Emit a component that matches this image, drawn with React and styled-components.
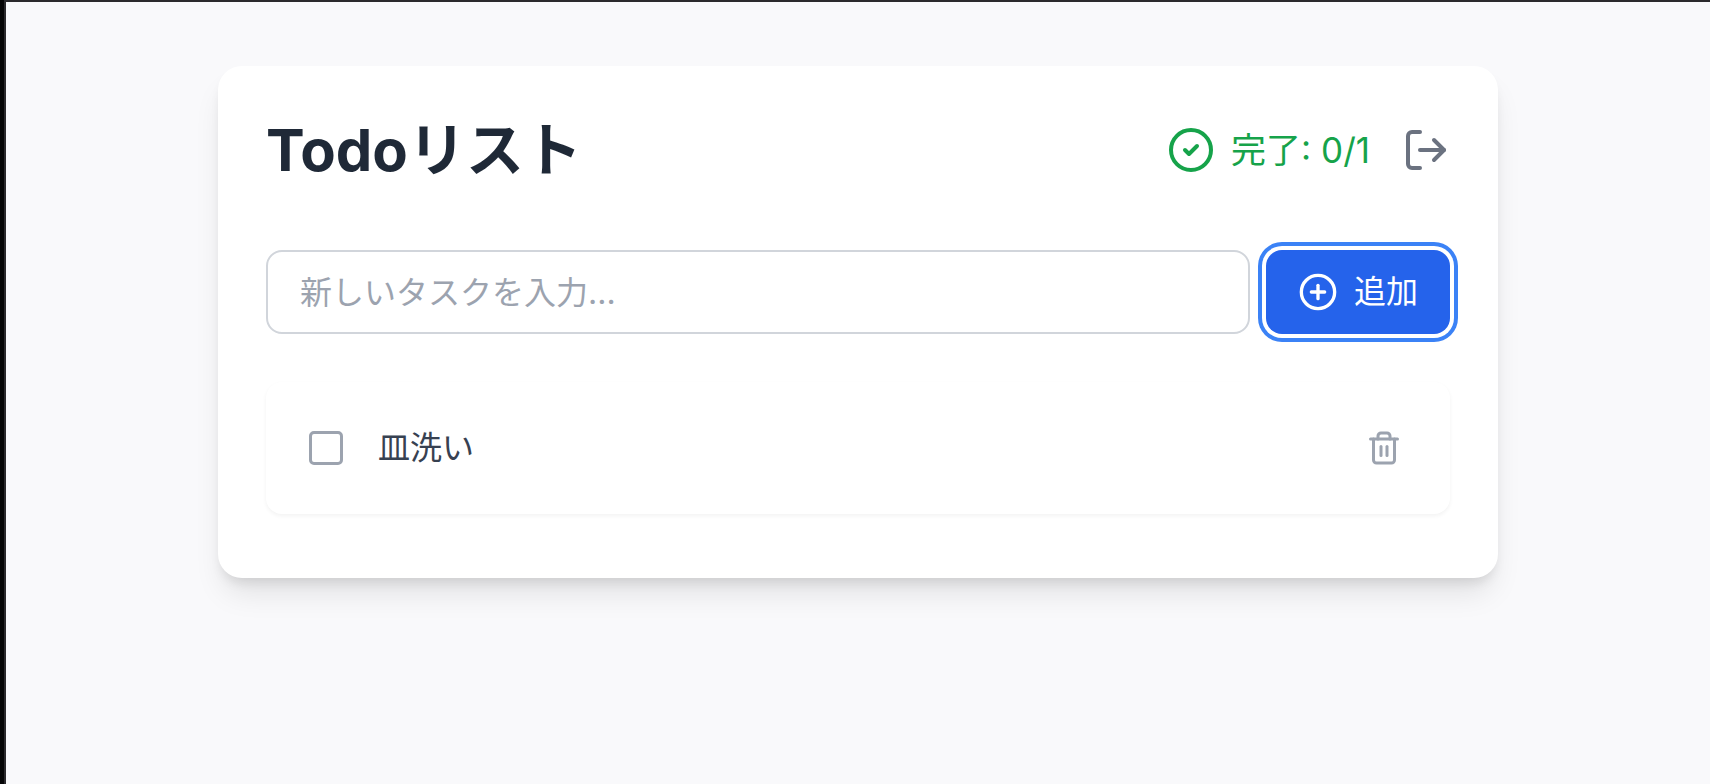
import React, { useState } from "react";
import styled, { createGlobalStyle } from "styled-components";
import { CircleCheck, CirclePlus, LogOut, Trash2 } from "lucide-react";

const GlobalStyle = createGlobalStyle`
  *, *::before, *::after { box-sizing: border-box; }
  body {
    margin: 0;
    background: #f9f9fb;
    color: #1f2937;
    font-family: Inter, "Noto Sans CJK JP", sans-serif;
    font-size: 32px;
    line-height: 48px;
  }
  button, input { font: inherit; }
  svg { display: block; flex: none; }
`;

const Frame = styled.div`
  min-height: 100vh;
  border-left: 4px solid #050506;
`;

const Page = styled.main`
  min-height: 100vh;
  padding: 64px 32px;
  border-top: 2px solid #2b2a2d;
  border-left: 2px solid #2b2a2d;
`;

const Card = styled.section`
  max-width: 1280px;
  margin: 0 auto;
  padding: 48px 48px 64px;
  border-radius: 24px;
  background: #fff;
  box-shadow: 0 20px 30px -6px rgba(0, 0, 0, 0.1), 0 8px 12px -4px rgba(0, 0, 0, 0.1);
`;

const Header = styled.header`
  display: flex;
  align-items: center;
  justify-content: space-between;
  margin-bottom: 64px;
`;

const Title = styled.h1`
  margin: 0;
  font-size: 58px;
  line-height: 72px;
  font-weight: 700;
`;

const HeaderActions = styled.div`
  display: flex;
  align-items: center;
  gap: 32px;
`;

const Progress = styled.div`
  display: flex;
  align-items: center;
  gap: 16px;
  color: #16a34a;
  font-size: 35px;
  line-height: 56px;
`;

const IconButton = styled.button`
  padding: ${(p) => p.$padding || 0}px;
  border: 0;
  background: none;
  color: ${(p) => p.$color};
  cursor: pointer;
`;

const Form = styled.form`
  display: flex;
  gap: 16px;
  margin-bottom: 48px;
`;

const TaskInput = styled.input`
  flex: 1;
  min-width: 0;
  height: 84px;
  padding: 0 32px;
  border: 2px solid #d1d5db;
  border-radius: 16px;
  background: #fff;
  color: #1f2937;
  &::placeholder { color: #9ca3af; opacity: 1; }
`;

const AddButton = styled.button`
  display: flex;
  align-items: center;
  gap: 16px;
  padding: 0 32px;
  border: 0;
  border-radius: 16px;
  background: #2563eb;
  color: #fff;
  white-space: nowrap;
  box-shadow: 0 0 0 4px #fff, 0 0 0 8px #3b82f6;
  cursor: pointer;
`;

const List = styled.ul`
  display: grid;
  gap: 24px;
  margin: 0;
  padding: 0;
  list-style: none;
`;

const Item = styled.li`
  display: flex;
  align-items: center;
  justify-content: space-between;
  padding: 32px;
  border-radius: 16px;
  background: #fff;
  box-shadow: 0 2px 4px rgba(0, 0, 0, 0.05);
`;

const ItemLabel = styled.label`
  display: flex;
  align-items: center;
  gap: 24px;
  color: ${(p) => (p.$done ? "#9ca3af" : "#374151")};
  text-decoration: ${(p) => (p.$done ? "line-through" : "none")};
`;

const CheckCell = styled.span`
  display: grid;
  place-items: center;
  width: 56px;
  height: 56px;
`;

const Checkbox = styled.input`
  appearance: none;
  width: 34px;
  height: 34px;
  margin: 0;
  border: 3px solid #9ca3af;
  border-radius: 5px;
  &:checked { background: #16a34a; border-color: #16a34a; }
`;

export default function App() {
  const [tasks, setTasks] = useState([{ id: 1, title: "皿洗い", done: false }]);
  const [draft, setDraft] = useState("");
  const doneCount = tasks.filter((t) => t.done).length;

  const addTask = (e) => {
    e.preventDefault();
    if (!draft.trim()) return;
    setTasks([...tasks, { id: Date.now(), title: draft.trim(), done: false }]);
    setDraft("");
  };
  const toggle = (id) => setTasks(tasks.map((t) => (t.id === id ? { ...t, done: !t.done } : t)));
  const remove = (id) => setTasks(tasks.filter((t) => t.id !== id));

  return (
    <>
      <GlobalStyle />
      <Frame>
        <Page>
          <Card>
            <Header>
              <Title>Todoリスト</Title>
              <HeaderActions>
                <Progress>
                  <CircleCheck size={48} />
                  <span>完了: {doneCount}/{tasks.length}</span>
                </Progress>
                <IconButton type="button" $color="#6b7280" aria-label="ログアウト">
                  <LogOut size={48} />
                </IconButton>
              </HeaderActions>
            </Header>
            <Form onSubmit={addTask}>
              <TaskInput
                type="text"
                aria-label="新しいタスク"
                placeholder="新しいタスクを入力..."
                value={draft}
                onChange={(e) => setDraft(e.target.value)}
              />
              <AddButton type="submit">
                <CirclePlus size={40} />
                <span>追加</span>
              </AddButton>
            </Form>
            <List>
              {tasks.map((task) => (
                <Item key={task.id}>
                  <ItemLabel $done={task.done}>
                    <CheckCell>
                      <Checkbox type="checkbox" checked={task.done} onChange={() => toggle(task.id)} />
                    </CheckCell>
                    {task.title}
                  </ItemLabel>
                  <IconButton type="button" $padding={16} $color="#9ca3af" aria-label="削除" onClick={() => remove(task.id)}>
                    <Trash2 size={36} />
                  </IconButton>
                </Item>
              ))}
            </List>
          </Card>
        </Page>
      </Frame>
    </>
  );
}
